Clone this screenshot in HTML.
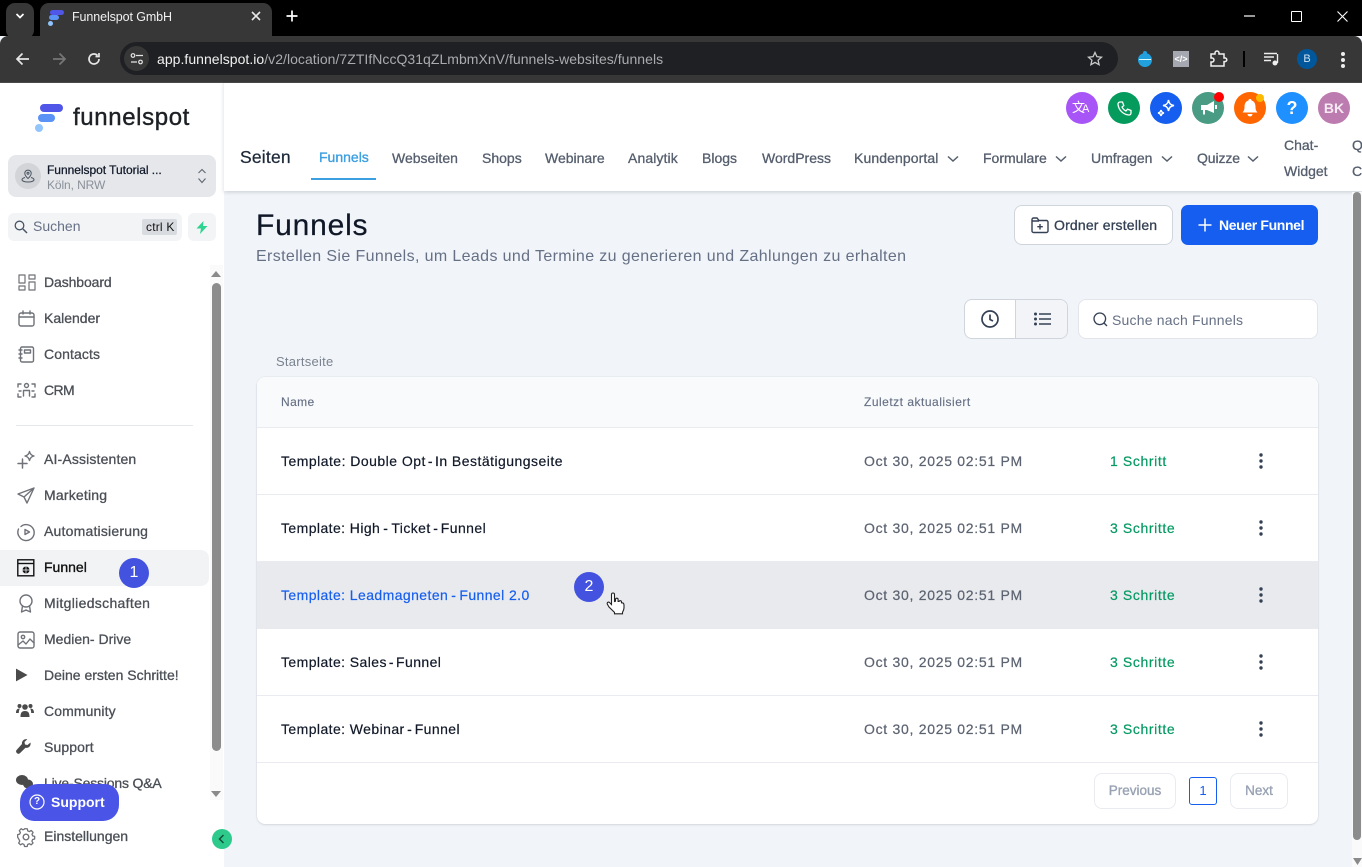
<!DOCTYPE html>
<html lang="de"><head><meta charset="utf-8"><title>Funnelspot GmbH</title>
<style>
html,body{margin:0;padding:0;width:1362px;height:867px;overflow:hidden;background:#f1f5f9;font-family:"Liberation Sans",sans-serif}
.a{position:absolute}
.t{position:absolute;white-space:nowrap;line-height:20px;height:20px}
svg{position:absolute;overflow:visible}
.nav{font-size:14px;color:#4b4f56;font-weight:400;-webkit-text-stroke:.3px #4b4f56}
.tab{font-size:14px;color:#555e6d;top:148px;-webkit-text-stroke:.3px #555e6d}
.row{position:absolute;left:257px;width:1061px;height:66px;border-bottom:1px solid #e9ebf0;background:#fff}
.name{font-size:14px;color:#101828;left:281px;letter-spacing:.42px;-webkit-text-stroke:.2px currentColor}
.date{font-size:14px;color:#5b6270;left:864px;letter-spacing:.71px;-webkit-text-stroke:.2px #5b6270}
.step{font-size:14px;color:#059a63;left:1110px;letter-spacing:.62px;-webkit-text-stroke:.2px #059a63}
.ic{fill:none;stroke:#6f7278;stroke-width:1.4;stroke-linecap:round;stroke-linejoin:round}
.top{position:absolute;top:92px;width:32px;height:32px;border-radius:50%}
</style></head><body>

<!-- Browser chrome -->
<div class="a" style="left:0;top:0;width:1362px;height:36px;background:#000"></div>
<div class="a" style="left:0;top:36px;width:1362px;height:46px;background:#373737;border-radius:8px 8px 0 0"></div>
<div class="a" style="left:0;top:82px;width:1362px;height:1px;background:#4a4a4a"></div>
<div class="a" style="left:6px;top:3px;width:28px;height:36px;background:#373737;border-radius:9px 9px 9px 9px"></div>
<svg style="left:15px;top:12px" width="10" height="8"><path d="M1.500 2 5 5.500 8.500 2" fill="none" stroke="#fff" stroke-width="1.700"/></svg>
<div class="a" style="left:40px;top:3px;width:232px;height:40px;background:#373737;border-radius:9px 9px 0 0"></div>
<div class="a" style="left:50px;top:10px;width:14px;height:5px;background:#4f56e8;border-radius:3px"></div>
<div class="a" style="left:49px;top:15px;width:10px;height:5px;background:#5a92f5;border-radius:3px"></div>
<div class="a" style="left:48px;top:21px;width:5px;height:5px;background:#8fc4fb;border-radius:50%"></div>
<div class="t" style="left:72px;top:7px;font-size:12.500px;color:#f1f1f1;letter-spacing:-.1px">Funnelspot GmbH</div>
<svg style="left:251px;top:11px" width="10" height="10"><path d="M1 1 9 9M9 1 1 9" stroke="#e8e8e8" stroke-width="1.600"/></svg>
<svg style="left:286px;top:10px" width="12" height="12"><path d="M6 .5v11M.5 6h11" stroke="#fff" stroke-width="1.700"/></svg>
<svg style="left:1244px;top:15px" width="12" height="2"><path d="M0 1h11" stroke="#fff" stroke-width="1.200"/></svg>
<div class="a" style="left:1291px;top:11px;width:9px;height:9px;border:1.200px solid #fff;border-radius:1px"></div>
<svg style="left:1337px;top:11px" width="11" height="11"><path d="M.5.5l10 10M10.500.5l-10 10" stroke="#fff" stroke-width="1.100"/></svg>

<svg style="left:15px;top:52px" width="16" height="14"><path d="M14 7H2M7.500 1.500 2 7l5.500 5.500" fill="none" stroke="#e6e6e6" stroke-width="1.700"/></svg>
<svg style="left:51px;top:52px" width="16" height="14"><path d="M2 7h12M8.500 1.500 14 7l-5.500 5.500" fill="none" stroke="#777" stroke-width="1.700"/></svg>
<svg style="left:87px;top:52px" width="14" height="14"><path d="M12 7a5 5 0 1 1-1.500-3.600M12 1v3.500H8.500" fill="none" stroke="#e6e6e6" stroke-width="1.700"/></svg>
<div class="a" style="left:120px;top:42px;width:998px;height:33px;background:#1f2023;border-radius:17px"></div>
<div class="a" style="left:124px;top:46px;width:25px;height:25px;background:#373737;border-radius:50%"></div>
<svg style="left:130px;top:52px" width="14" height="14"><path d="M6 3.500h7M1 10h6" stroke="#e6e6e6" stroke-width="1.300"/><circle cx="3" cy="3.500" r="1.800" fill="none" stroke="#e6e6e6" stroke-width="1.200"/><circle cx="10.500" cy="10" r="1.800" fill="none" stroke="#e6e6e6" stroke-width="1.200"/></svg>
<div class="t" style="left:157px;top:49px;font-size:14px;color:#a9abae;letter-spacing:.035px"><span style="color:#f1f1f1">app.funnelspot.io</span>/v2/location/7ZTIfNccQ31qZLmbmXnV/funnels-websites/funnels</div>
<svg style="left:1087px;top:51px" width="16" height="16"><path d="M8 1.500l1.900 4.200 4.600.5-3.400 3 1 4.500L8 11.400l-4.100 2.300 1-4.500-3.400-3 4.600-.5z" fill="none" stroke="#c8c8c8" stroke-width="1.300"/></svg>
<div class="a" style="left:1138px;top:53px;width:14px;height:14px;background:#21a0dd;border-radius:50%"></div>
<div class="a" style="left:1143px;top:51px;width:4px;height:4px;background:#21a0dd;border-radius:50%"></div>
<div class="a" style="left:1139px;top:59px;width:12px;height:1px;background:#dff"></div>
<div class="a" style="left:1173px;top:51px;width:16px;height:16px;background:#a5a8b0"></div>
<div class="t" style="left:1173px;top:49px;width:16px;text-align:center;color:#fff;font-size:9px;font-weight:700">&lt;/&gt;</div>
<svg style="left:1209px;top:50px" width="18" height="18"><path d="M2 4h4V3a2 2 0 0 1 4 0v1h5v4h1a1.800 1.800 0 0 1 0 3.600h-1V16H2v-4h1a2 2 0 0 0 0-4H2z" fill="none" stroke="#f0f0f0" stroke-width="1.500"/></svg>
<div class="a" style="left:1243px;top:51px;width:2px;height:16px;background:#000"></div>
<svg style="left:1263px;top:52px" width="16" height="14"><path d="M1 1.500h13M1 5h10M1 8.500h7" stroke="#eee" stroke-width="1.400"/><path d="M14.500 2v9" stroke="#eee" stroke-width="1.400"/><circle cx="12" cy="11" r="2.500" fill="#eee"/></svg>
<div class="a" style="left:1297px;top:49px;width:20px;height:20px;background:#01579b;border-radius:50%;color:#cfe3f5;font-size:11px;line-height:20px;text-align:center">B</div>
<div class="a" style="left:1341px;top:52px;width:4px;height:4px;background:#eee;border-radius:50%"></div>
<div class="a" style="left:1341px;top:58px;width:4px;height:4px;background:#eee;border-radius:50%"></div>
<div class="a" style="left:1341px;top:64px;width:4px;height:4px;background:#eee;border-radius:50%"></div>

<!-- Sidebar -->
<div class="a" style="left:0;top:83px;width:224px;height:784px;background:#fff;border-right:0"></div>
<div class="a" style="left:40px;top:104px;width:23px;height:8px;background:#4f56e8;border-radius:4px"></div>
<div class="a" style="left:38px;top:114px;width:17px;height:8px;background:#5a92f5;border-radius:4px"></div>
<div class="a" style="left:35px;top:124px;width:8px;height:8px;background:#93c5fd;border-radius:50%"></div>
<div class="t" style="left:73px;top:103px;height:30px;line-height:30px;font-size:24px;color:#1d2125;letter-spacing:.62px;-webkit-text-stroke:.4px #1d2125">funnelspot</div>

<div class="a" style="left:8px;top:155px;width:208px;height:42px;background:#e5e7eb;border-radius:8px"></div>
<div class="a" style="left:15px;top:163px;width:26px;height:26px;background:#d2d4d8;border-radius:50%"></div>
<svg style="left:21px;top:169px" width="14" height="14"><path d="M7 9.500S3.800 6.800 3.800 4.300a3.200 3.200 0 0 1 6.400 0C10.200 6.800 7 9.500 7 9.500z" fill="none" stroke="#4b5563" stroke-width="1"/><circle cx="7" cy="4.300" r="1" fill="none" stroke="#4b5563"/><path d="M4 8.500C2 9 1 9.800 1 10.800 1 12 3.500 13 7 13s6-1 6-2.200c0-1-1-1.800-3-2.300" fill="none" stroke="#4b5563"/></svg>
<div class="t" style="left:47px;top:160px;font-size:12px;color:#101828;letter-spacing:-.03px;-webkit-text-stroke:.25px #101828">Funnelspot Tutorial ...</div>
<div class="t" style="left:47px;top:175px;font-size:12px;color:#8a9099;letter-spacing:-.1px">Köln, NRW</div>
<svg style="left:197px;top:168px" width="10" height="18"><path d="M1.500 5 5 1.500 8.500 5M1.500 10.500 5 14.500 8.500 10.500" fill="none" stroke="#606770" stroke-width="1.100"/></svg>

<div class="a" style="left:8px;top:213px;width:174px;height:28px;background:#f3f4f6;border-radius:6px"></div>
<svg style="left:14px;top:220px" width="14" height="14"><circle cx="5.500" cy="5.500" r="4.300" fill="none" stroke="#475467" stroke-width="1.300"/><path d="M9 9l4 4" stroke="#475467" stroke-width="1.500"/></svg>
<div class="t" style="left:33px;top:216px;font-size:14px;color:#667085">Suchen</div>
<div class="a" style="left:142px;top:219px;width:35px;height:16px;background:#d8dbe0;border-radius:2px"></div>
<div class="t" style="left:146px;top:217px;font-size:12px;color:#111;letter-spacing:.2px">ctrl K</div>
<div class="a" style="left:188px;top:213px;width:28px;height:28px;background:#f3f4f6;border-radius:6px"></div>
<svg style="left:196px;top:221px" width="12" height="13"><path d="M7.500 0 .5 7.500H5L4 13l7.500-8H7z" fill="#2dd48f"/></svg>

<div class="a" style="left:210px;top:265px;width:13px;height:535px;background:#fafafa"></div>
<svg style="left:211px;top:270px" width="10" height="8"><path d="M0 7 5 1l5 6z" fill="#8a8a8a"/></svg>
<div class="a" style="left:212px;top:283px;width:9px;height:468px;background:#8c8c8c;border-radius:5px"></div>
<svg style="left:211px;top:790px" width="10" height="8"><path d="M0 1 5 7l5-6z" fill="#8a8a8a"/></svg>

<svg style="left:18px;top:274px" width="18" height="17" class="ic"><path d="M1 1h6v8H1zM1 12h6v4H1zM11 1h6v4h-6zM11 8h6v8h-6z" stroke-width="1.200"/></svg>
<div class="t nav" style="left:44px;top:272px;letter-spacing:-.1px">Dashboard</div>
<svg style="left:18px;top:310px" width="17" height="17" class="ic"><rect x="1" y="3" width="15" height="13" rx="2"/><path d="M1 7h15M5 1v3M12 1v3"/></svg>
<div class="t nav" style="left:44px;top:308px">Kalender</div>
<svg style="left:18px;top:346px" width="17" height="17" class="ic"><rect x="2.500" y="1" width="13" height="15" rx="1.500"/><rect x="6.500" y="4" width="6" height="3"/><path d="M1 4h3M1 8h3M1 12h3"/></svg>
<div class="t nav" style="left:44px;top:344px;letter-spacing:.1px">Contacts</div>
<svg style="left:17px;top:382px" width="19" height="17" class="ic"><circle cx="9.500" cy="3.500" r="2"/><path d="M6.500 14V8.500h6V14M1 5V2h3M18 5V2h-3M1 12v3h3M18 12v3h-3M2 9h2M15 9h2"/></svg>
<div class="t nav" style="left:44px;top:380px;letter-spacing:-.6px">CRM</div>
<div class="a" style="left:16px;top:425px;width:177px;height:1px;background:#e5e7eb"></div>

<svg style="left:16px;top:450px" width="20" height="20" class="ic"><path d="M6.500 9v9M2 13.500h9" stroke-width="1.500"/><path d="M13.500 1.500c.6 2.700 1.800 3.900 4.500 4.500-2.700.6-3.900 1.800-4.500 4.500C12.900 7.800 11.700 6.600 9 6c2.700-.6 3.900-1.800 4.500-4.500z"/></svg>
<div class="t nav" style="left:44px;top:449px;letter-spacing:.15px">AI-Assistenten</div>
<svg style="left:17px;top:487px" width="18" height="17" class="ic"><path d="M17 1 1 7l6 3 3 6zM7 10 17 1"/></svg>
<div class="t nav" style="left:44px;top:485px;letter-spacing:.2px">Marketing</div>
<svg style="left:17px;top:523px" width="18" height="18" class="ic"><path d="M4 3.500A8 8 0 1 1 2.500 14 8 8 0 0 1 1.500 6"/><path d="M8 6.500l4.500 2.500L8 11.500z"/></svg>
<div class="t nav" style="left:44px;top:521px;letter-spacing:.2px">Automatisierung</div>
<div class="a" style="left:0;top:550px;width:209px;height:36px;background:#f2f3f5;border-radius:0 8px 8px 0"></div>
<svg style="left:17px;top:559px" width="18" height="18"><rect x=".8" y=".8" width="16" height="16" fill="none" stroke="#111" stroke-width="1.400"/><path d="M1 4.500h16" stroke="#111" stroke-width="1.400"/><circle cx="9" cy="11" r="3.500" fill="#111"/><path d="M5.500 11h7M9 7.500v7" stroke="#fff" stroke-width=".7"/></svg>
<div class="t" style="left:44px;top:557px;font-size:14px;color:#101010;-webkit-text-stroke:.35px #101010">Funnel</div>
<div class="a" style="left:119px;top:558px;width:30px;height:30px;background:#4353e0;border-radius:50%;color:#fff;font-size:16px;line-height:30px;text-align:center">1</div>
<svg style="left:18px;top:594px" width="16" height="19" class="ic"><circle cx="8" cy="7" r="6"/><path d="M4.500 12 3.500 18 8 16l4.500 2-1-6"/></svg>
<div class="t nav" style="left:44px;top:593px;letter-spacing:.32px">Mitgliedschaften</div>
<svg style="left:17px;top:631px" width="18" height="18" class="ic"><rect x="1" y="1" width="16" height="16" rx="2"/><circle cx="6" cy="6" r="1.700"/><path d="M1 14l5-4 3 3 4-5 4 4"/></svg>
<div class="t nav" style="left:44px;top:629px">Medien- Drive</div>
<svg style="left:16px;top:668px" width="12" height="14"><path d="M.5 1.500 10.500 7 .5 12.500z" fill="#4a4a4a" stroke="#4a4a4a"/></svg>
<div class="t nav" style="left:44px;top:665px">Deine ersten Schritte!</div>
<svg style="left:16px;top:703px" width="18" height="15" fill="#4a4a4a"><circle cx="9" cy="4" r="2.800"/><circle cx="3.500" cy="3" r="2"/><circle cx="14.500" cy="3" r="2"/><path d="M4.500 14c0-4 1-6 4.500-6s4.500 2 4.500 6zM0 10c0-3 1-4.500 4-4.500-.8 1.200-1.200 2.500-1.200 4.500zM18 10c0-3-1-4.500-4-4.500.8 1.200 1.200 2.500 1.200 4.500z"/></svg>
<div class="t nav" style="left:44px;top:701px;letter-spacing:.1px">Community</div>
<svg style="left:16px;top:739px" width="15" height="15"><path d="M14.500 3.500 11.500 6 9 5.500 8.500 3l2.800-2.800C8 -.5 5.500 2 6 5L.8 10.800a2.300 2.300 0 0 0 3.200 3.300L9.500 8.800c3 .7 5.700-1.800 5-5.300z" fill="#4a4a4a"/></svg>
<div class="t nav" style="left:44px;top:737px;letter-spacing:.1px">Support</div>
<svg style="left:16px;top:775px" width="17" height="14" fill="#4a4a4a"><ellipse cx="6" cy="5" rx="6" ry="5"/><ellipse cx="12" cy="9" rx="5" ry="4.500"/></svg>
<div class="t nav" style="left:44px;top:773px;letter-spacing:-.18px">Live-Sessions Q&amp;A</div>
<div class="a" style="left:20px;top:784px;width:99px;height:37px;background:#4a55e8;border-radius:18px 14px 16px 14px"></div>
<svg style="left:29px;top:794px" width="16" height="16"><circle cx="8" cy="8" r="7" fill="none" stroke="#fff" stroke-width="1.200"/></svg>
<div class="t" style="left:29px;top:796px;width:16px;text-align:center;font-size:10px;height:12px;line-height:12px;color:#fff;font-weight:700">?</div>
<div class="t" style="left:51px;top:792px;font-size:14px;color:#fff;font-weight:700">Support</div>
<svg style="left:17px;top:828px" width="18" height="18" class="ic"><circle cx="9" cy="9" r="2.800"/><path d="M7.500 1h3l.5 2.300 1.800.8 2-1.200 2 2.100-1.200 2 .7 1.700 2.200.6v2.800l-2.200.6-.8 1.800 1.200 2-2 2-2-1.200-1.800.8-.5 2.200h-2.900l-.6-2.200-1.800-.8-2 1.200-2-2 1.200-2-.8-1.800L0 10.200V7.400l2.200-.6.800-1.700-1.200-2 2-2.100 2 1.200 1.700-.8z" transform="scale(.92) translate(.7 -.2)"/></svg>
<div class="t nav" style="left:44px;top:826px">Einstellungen</div>

<!-- Top header -->
<div class="a" style="left:224px;top:83px;width:1138px;height:108px;background:#fff;box-shadow:0 1px 4px rgba(16,24,40,.18)"></div>
<div class="a" style="left:223px;top:83px;width:1px;height:108px;background:#f0f0f0"></div>

<div class="top" style="left:1066px;background:#a855f7"></div>
<div class="t" style="left:1072px;top:100px;font-size:13px;color:#fff;height:16px;line-height:16px">文<span style="font-size:11px;margin-left:-3px">A</span></div>
<div class="top" style="left:1108px;background:#059b5d"></div>
<svg style="left:1117px;top:101px" width="15" height="15"><path d="M3 1 5.500 1 6.800 4.500 5 6c.8 1.700 2.300 3.200 4 4l1.500-1.800L14 9.500V12c0 1.200-1 2.200-2.300 2C6 13.400 1.600 9 1 3.300.9 2 1.800 1 3 1z" fill="none" stroke="#fff" stroke-width="1.300"/></svg>
<div class="top" style="left:1150px;background:#155eef"></div>
<svg style="left:1157px;top:99px" width="18" height="18" fill="none" stroke="#fff" stroke-width="1.500"><path d="M11.500 1c.6 3.500 2 5 5.500 5.500-3.500.6-5 2-5.500 5.500-.6-3.500-2-5-5.500-5.500C9.500 6 11 4.500 11.500 1zM4 11c.3 1.800 1 2.600 3 3-2 .3-2.700 1.100-3 3-.3-1.900-1-2.700-3-3 2-.4 2.700-1.200 3-3z"/></svg>
<div class="top" style="left:1192px;background:#4a9b84"></div>
<svg style="left:1201px;top:100px" width="16" height="16" fill="#fff"><path d="M0 5h6l7-4v12L6 10H4v4.500H2V10H0z"/><rect x="14" y="5" width="2" height="4"/></svg>
<div class="a" style="left:1214px;top:92px;width:10px;height:10px;background:#f00;border-radius:50%"></div>
<div class="top" style="left:1234px;background:#ff6600"></div>
<svg style="left:1242px;top:99px" width="16" height="18" fill="#fff"><path d="M8 0a1.500 1.500 0 0 1 1.500 1.500C12.500 2.300 13.500 5 13.500 8c0 3 .8 4 2 5.500H.5C1.700 12 2.500 11 2.500 8c0-3 1-5.700 4-6.500A1.500 1.500 0 0 1 8 0z"/><path d="M5.500 15h5a2.500 2.500 0 0 1-5 0z"/></svg>
<div class="a" style="left:1256px;top:94px;width:8px;height:8px;background:#fcb900;border-radius:50%"></div>
<div class="top" style="left:1276px;background:#1e90ff;color:#fff;font-size:18px;line-height:32px;text-align:center;font-weight:700">?</div>
<div class="top" style="left:1318px;background:#bc7cb0;color:#f6eaf3;font-size:14px;line-height:32px;text-align:center;font-weight:700">BK</div>

<div class="t" style="left:240px;top:147px;font-size:17.500px;color:#1d2939;letter-spacing:.2px;-webkit-text-stroke:.25px #1d2939">Seiten</div>
<div class="t" style="left:319px;top:147px;font-size:14px;color:#3b9fe0;-webkit-text-stroke:.35px #3b9fe0">Funnels</div>
<div class="a" style="left:311px;top:178px;width:65px;height:2px;background:#3b9fe0"></div>
<div class="t tab" style="left:392px">Webseiten</div>
<div class="t tab" style="left:482px">Shops</div>
<div class="t tab" style="left:545px">Webinare</div>
<div class="t tab" style="left:628px;letter-spacing:.1px">Analytik</div>
<div class="t tab" style="left:702px">Blogs</div>
<div class="t tab" style="left:762px">WordPress</div>
<div class="t tab" style="left:854px;letter-spacing:.1px">Kundenportal</div>
<div class="t tab" style="left:983px">Formulare</div>
<div class="t tab" style="left:1091px">Umfragen</div>
<div class="t tab" style="left:1197px;letter-spacing:-.1px">Quizze</div>
<svg style="left:947px;top:155px" width="12" height="8"><path d="M1 1.500 6 6l5-4.500" fill="none" stroke="#555e6d" stroke-width="1.500"/></svg>
<svg style="left:1055px;top:155px" width="12" height="8"><path d="M1 1.500 6 6l5-4.500" fill="none" stroke="#555e6d" stroke-width="1.500"/></svg>
<svg style="left:1161px;top:155px" width="12" height="8"><path d="M1 1.500 6 6l5-4.500" fill="none" stroke="#555e6d" stroke-width="1.500"/></svg>
<svg style="left:1247px;top:155px" width="12" height="8"><path d="M1 1.500 6 6l5-4.500" fill="none" stroke="#555e6d" stroke-width="1.500"/></svg>
<div class="t tab" style="left:1284px;top:135px">Chat-</div>
<div class="t tab" style="left:1284px;top:161px">Widget</div>
<div class="t tab" style="left:1352px;top:135px">Q</div>
<div class="t tab" style="left:1352px;top:161px">Co</div>

<!-- Page scrollbar -->
<div class="a" style="left:1352px;top:192px;width:10px;height:675px;background:#fafafa"></div>
<div class="a" style="left:1353px;top:192px;width:8px;height:648px;background:#8c8c8c;border-radius:4px"></div>
<svg style="left:1353px;top:858px" width="9" height="7"><path d="M0 0 4.500 7 9 0z" fill="#8a8a8a"/></svg>

<!-- Page header -->
<div class="t" style="left:256px;top:208px;height:36px;line-height:36px;font-size:30px;color:#101828;letter-spacing:.8px;-webkit-text-stroke:.25px #101828">Funnels</div>
<div class="t" style="left:256px;top:247px;font-size:16px;color:#667085;letter-spacing:.37px">Erstellen Sie Funnels, um Leads und Termine zu generieren und Zahlungen zu erhalten</div>

<div class="a" style="left:1014px;top:205px;width:157px;height:38px;background:#fff;border:1px solid #d0d5dd;border-radius:8px"></div>
<svg style="left:1031px;top:216px" width="18" height="18"><path d="M1 3.500A1.500 1.500 0 0 1 2.500 2H6l2 2.500h7.500A1.500 1.500 0 0 1 17 6v9a1.500 1.500 0 0 1-1.500 1.500h-13A1.500 1.500 0 0 1 1 15zM1 5h7M9 8v5.500M6.300 10.700h5.500" fill="none" stroke="#344054" stroke-width="1.400"/></svg>
<div class="t" style="left:1054px;top:215px;font-size:14px;color:#344054;letter-spacing:.18px;-webkit-text-stroke:.3px #344054">Ordner erstellen</div>
<div class="a" style="left:1181px;top:205px;width:137px;height:40px;background:#155eef;border-radius:7px"></div>
<svg style="left:1198px;top:218px" width="14" height="14"><path d="M7 .5v13M.5 7h13" stroke="#fff" stroke-width="1.500"/></svg>
<div class="t" style="left:1219px;top:215px;font-size:14px;color:#fff;font-weight:700;letter-spacing:-.36px">Neuer Funnel</div>

<div class="a" style="left:964px;top:299px;width:102px;height:38px;background:#fff;border:1px solid #d0d5dd;border-radius:8px;overflow:hidden"><div class="a" style="left:50px;top:0;width:52px;height:38px;background:#f2f4f7;border-left:1px solid #d0d5dd"></div></div>
<svg style="left:981px;top:310px" width="18" height="18"><circle cx="9" cy="9" r="8" fill="none" stroke="#344054" stroke-width="1.700"/><path d="M9 4.500V9.500l3 1.500" fill="none" stroke="#344054" stroke-width="1.700"/></svg>
<svg style="left:1034px;top:312px" width="17" height="14"><path d="M5 2h12M5 7h12M5 12h12" stroke="#344054" stroke-width="1.600"/><circle cx="1.500" cy="2" r="1.500" fill="#344054"/><circle cx="1.500" cy="7" r="1.500" fill="#344054"/><circle cx="1.500" cy="12" r="1.500" fill="#344054"/></svg>
<div class="a" style="left:1078px;top:299px;width:238px;height:38px;background:#fff;border:1px solid #e2e5ea;border-radius:8px"></div>
<svg style="left:1093px;top:312px" width="15" height="15"><circle cx="6.800" cy="6.800" r="5.800" fill="none" stroke="#344054" stroke-width="1.300"/><path d="M11 11l3 3" stroke="#344054" stroke-width="1.300"/></svg>
<div class="t" style="left:1112px;top:310px;font-size:14px;color:#667085;letter-spacing:.2px">Suche nach Funnels</div>

<div class="t" style="left:276px;top:352px;font-size:13px;color:#7a828e;letter-spacing:.26px">Startseite</div>

<!-- Table -->
<div class="a" style="left:257px;top:377px;width:1061px;height:447px;background:#fff;border-radius:8px;box-shadow:0 0 1px rgba(16,24,40,.18),0 1px 2px rgba(16,24,40,.1)"></div>
<div class="a" style="left:257px;top:377px;width:1061px;height:50px;background:#f9fafb;border-bottom:1px solid #e9ebf0;border-radius:8px 8px 0 0"></div>
<div class="t" style="left:281px;top:392px;font-size:12px;color:#667085;letter-spacing:.4px;-webkit-text-stroke:.15px #667085">Name</div>
<div class="t" style="left:864px;top:392px;font-size:12px;color:#667085;letter-spacing:.5px;-webkit-text-stroke:.15px #667085">Zuletzt aktualisiert</div>

<div class="row" style="top:428px"></div>
<div class="row" style="top:495px"></div>
<div class="row" style="top:562px;background:#e9eaee;border-bottom-color:#e9eaee"></div>
<div class="row" style="top:629px"></div>
<div class="row" style="top:696px"></div>

<div class="t name" style="top:451px;letter-spacing:.47px">Template: Double Opt<span style="padding:0 2px">-</span>In Bestätigungseite</div>
<div class="t name" style="top:518px">Template: High<span style="padding:0 3px">-</span>Ticket<span style="padding:0 2.500px">-</span>Funnel</div>
<div class="t name" style="top:585px;color:#155eef">Template: Leadmagneten<span style="padding:0 3px">-</span>Funnel 2.0</div>
<div class="t name" style="top:652px">Template: Sales<span style="padding:0 2px">-</span>Funnel</div>
<div class="t name" style="top:719px">Template: Webinar<span style="padding:0 2.500px">-</span>Funnel</div>

<div class="t date" style="top:451px">Oct 30, 2025 02:51 PM</div>
<div class="t date" style="top:518px">Oct 30, 2025 02:51 PM</div>
<div class="t date" style="top:585px">Oct 30, 2025 02:51 PM</div>
<div class="t date" style="top:652px">Oct 30, 2025 02:51 PM</div>
<div class="t date" style="top:719px">Oct 30, 2025 02:51 PM</div>

<div class="t step" style="top:451px">1 Schritt</div>
<div class="t step" style="top:518px">3 Schritte</div>
<div class="t step" style="top:585px">3 Schritte</div>
<div class="t step" style="top:652px">3 Schritte</div>
<div class="t step" style="top:719px">3 Schritte</div>

<svg style="left:1259px;top:453px" width="4" height="16" fill="#344054"><circle cx="2" cy="2" r="1.700"/><circle cx="2" cy="8" r="1.700"/><circle cx="2" cy="14" r="1.700"/></svg>
<svg style="left:1259px;top:520px" width="4" height="16" fill="#344054"><circle cx="2" cy="2" r="1.700"/><circle cx="2" cy="8" r="1.700"/><circle cx="2" cy="14" r="1.700"/></svg>
<svg style="left:1259px;top:587px" width="4" height="16" fill="#344054"><circle cx="2" cy="2" r="1.700"/><circle cx="2" cy="8" r="1.700"/><circle cx="2" cy="14" r="1.700"/></svg>
<svg style="left:1259px;top:654px" width="4" height="16" fill="#344054"><circle cx="2" cy="2" r="1.700"/><circle cx="2" cy="8" r="1.700"/><circle cx="2" cy="14" r="1.700"/></svg>
<svg style="left:1259px;top:721px" width="4" height="16" fill="#344054"><circle cx="2" cy="2" r="1.700"/><circle cx="2" cy="8" r="1.700"/><circle cx="2" cy="14" r="1.700"/></svg>

<div class="a" style="left:574px;top:572px;width:30px;height:30px;background:#4353e0;border-radius:50%;color:#fff;font-size:16px;line-height:30px;text-align:center">2</div>
<svg style="left:606px;top:590px" width="20" height="26"><path d="M5.500 4.500a1.500 1.500 0 0 1 3 0v7l1-.3V9.500a1.300 1.300 0 0 1 2.600 0v2l.9 0a1.300 1.300 0 0 1 2.500.3v1l.6 0c1.200 0 1.900 1 1.900 2.500v2.500c0 2-.7 3-1.500 4.500v1.500h-8v-1.500L3 17l-1.700-3c-.5-1.500 1-2.500 2.200-1.500l2 2z" fill="#fff" stroke="#222" stroke-width="1.100"/></svg>

<!-- Pagination -->
<div class="a" style="left:1094px;top:773px;width:80px;height:34px;border:1px solid #e9ebf0;border-radius:8px;background:#fff"></div>
<div class="t" style="left:1094px;top:781px;width:82px;text-align:center;font-size:13.500px;color:#98a2b3;-webkit-text-stroke:.35px #98a2b3">Previous</div>
<div class="a" style="left:1189px;top:777px;width:26px;height:26px;border:1px solid #155eef;border-radius:3px;background:#fff;color:#155eef;font-size:13px;line-height:26px;text-align:center">1</div>
<div class="a" style="left:1230px;top:773px;width:56px;height:34px;border:1px solid #e9ebf0;border-radius:8px;background:#fff"></div>
<div class="t" style="left:1230px;top:781px;width:58px;text-align:center;font-size:13.500px;color:#98a2b3;-webkit-text-stroke:.35px #98a2b3">Next</div>

<!-- Collapse toggle -->
<div class="a" style="left:212px;top:829px;width:20px;height:20px;background:#2dca8c;border-radius:50%"></div>
<svg style="left:218px;top:834px" width="7" height="10"><path d="M5.500 1 1.500 5l4 4" fill="none" stroke="#14503a" stroke-width="1.500"/></svg>
</body></html>
